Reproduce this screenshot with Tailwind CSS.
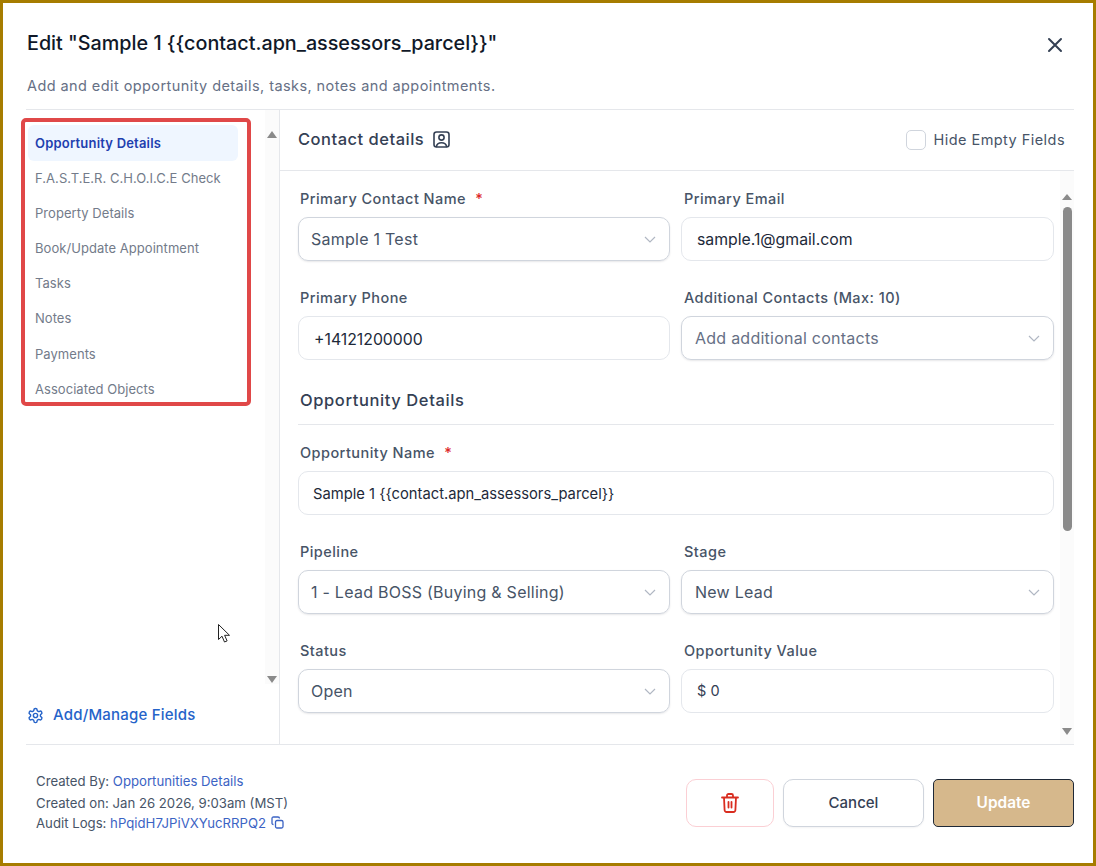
<!DOCTYPE html>
<html lang="en">
<head>
<meta charset="utf-8">
<title>Edit opportunity</title>
<script src="https://cdn.jsdelivr.net/npm/@tailwindcss/browser@4"></script>
</head>
<body class="bg-white">
<div class="relative w-[1096px] h-[866px] overflow-hidden border-[3px] border-[#a67c00] bg-white flex flex-col font-['Inter',sans-serif] text-[#344054]">

  <header class="ml-[23px] mr-[19px] h-[107px] shrink-0 border-b border-[#e5e7eb] relative">
    <h1 class="pl-px pt-[27px] text-[19.75px] leading-[26px] font-medium text-[#101828]">Edit "Sample 1 {{contact.apn_assessors_parcel}}"</h1>
    <p class="pl-px mt-[20px] text-[14.5px] tracking-[0.42px] leading-[20px] text-[#667085]">Add and edit opportunity details, tasks, notes and appointments.</p>
    <button class="absolute right-[11px] top-[34px] text-[#344054]" aria-label="Close">
      <svg class="w-[16px] h-[16px]" viewBox="0 0 16 16" fill="none" stroke="currentColor" stroke-width="2" stroke-linecap="round"><path d="M2 2l12 12M14 2L2 14"/></svg>
    </button>
  </header>

  <div class="ml-[23px] mr-[19px] h-[635px] shrink-0 flex border-b border-[#e5e7eb]">
    <aside class="w-[254px] shrink-0 border-r border-[#e5e7eb] flex flex-col">
      <div class="flex h-[574px]">
        <nav class="w-[239px] pl-[2px] pt-[15px] text-[13px] tracking-[0.05px] leading-[16px] text-[#737b8a] flex flex-col">
          <a class="h-[36px] flex items-center pl-[7px] w-[210px] rounded-md bg-[#eff6ff] font-semibold tracking-[0.2px] text-[#1e40af]">Opportunity Details</a>
          <a class="h-[35px] pb-[2px] pl-[7px] flex items-center">F.A.S.T.E.R. C.H.O.I.C.E Check</a>
          <a class="h-[35px] pb-[2px] pl-[7px] flex items-center">Property Details</a>
          <a class="h-[35px] pb-[2px] pl-[7px] flex items-center">Book/Update Appointment</a>
          <a class="h-[35px] pb-[2px] pl-[7px] flex items-center">Tasks</a>
          <a class="h-[35px] pb-[2px] pl-[7px] flex items-center">Notes</a>
          <a class="h-[36px] pl-[7px] flex items-center">Payments</a>
          <a class="h-[35px] pb-[2px] pl-[7px] flex items-center">Associated Objects</a>
        </nav>
        <div class="w-[14px] bg-[#fbfbfb] flex flex-col justify-between items-center pt-[21px] pb-[1px]">
          <div class="w-0 h-0 border-x-[5px] border-x-transparent border-b-[7px] border-b-[#8a8a8a]"></div>
          <div class="w-0 h-0 border-x-[5px] border-x-transparent border-t-[7px] border-t-[#8a8a8a]"></div>
        </div>
      </div>
      <a class="flex items-center gap-[9px] mt-[21px] text-[15px] tracking-[0.2px] leading-[20px] font-medium text-[#2563c9] pl-px">
        <svg class="w-[17px] h-[17px]" viewBox="0 0 24 24" fill="none" stroke="currentColor" stroke-width="2" stroke-linecap="round" stroke-linejoin="round"><path d="M12.22 2h-.44a2 2 0 0 0-2 2v.18a2 2 0 0 1-1 1.73l-.43.25a2 2 0 0 1-2 0l-.15-.08a2 2 0 0 0-2.73.73l-.22.38a2 2 0 0 0 .73 2.73l.15.1a2 2 0 0 1 1 1.72v.51a2 2 0 0 1-1 1.74l-.15.09a2 2 0 0 0-.73 2.73l.22.38a2 2 0 0 0 2.73.73l.15-.08a2 2 0 0 1 2 0l.43.25a2 2 0 0 1 1 1.73V20a2 2 0 0 0 2 2h.44a2 2 0 0 0 2-2v-.18a2 2 0 0 1 1-1.73l.43-.25a2 2 0 0 1 2 0l.15.08a2 2 0 0 0 2.73-.73l.22-.39a2 2 0 0 0-.73-2.73l-.15-.08a2 2 0 0 1-1-1.74v-.5a2 2 0 0 1 1-1.74l.15-.09a2 2 0 0 0 .73-2.73l-.22-.38a2 2 0 0 0-2.73-.73l-.15.08a2 2 0 0 1-2 0l-.43-.25a2 2 0 0 1-1-1.73V4a2 2 0 0 0-2-2z"/><circle cx="12" cy="12" r="3"/></svg>
        Add/Manage Fields
      </a>
    </aside>

    <main class="flex-1 min-w-0 flex flex-col">
      <div class="h-[61px] shrink-0 border-b border-[#e5e7eb] flex items-center justify-between pl-[18px] pr-[9px]">
        <div class="flex items-center gap-[9px] -mt-[2px]">
          <span class="text-[16.5px] tracking-[0.5px] leading-[24px] font-medium text-[#344054]">Contact details</span>
          <svg class="w-[17px] h-[17px]" viewBox="0 0 17 17" fill="none" stroke="currentColor" stroke-width="1.6" stroke-linecap="round" stroke-linejoin="round"><rect x="1" y="1" width="15" height="15" rx="2.5"/><circle cx="8.5" cy="6.5" r="2.6"/><path d="M3.5 15.5c.3-2.6 2-3.8 5-3.8s4.700 1.200 5 3.800"/></svg>
        </div>
        <label class="flex items-center gap-[8px] text-[14.5px] tracking-[0.45px] leading-[20px] text-[#475467]">
          <span class="w-[20px] h-[20px] rounded-[5px] border border-[#d0d5dd] bg-white"></span>
          Hide Empty Fields
        </label>
      </div>

      <div class="flex-1 min-h-0 flex relative">
        <form class="w-[757px] ml-[18px] pt-[17px] text-[14.5px] tracking-[0.45px] text-[#344054]">
          <div class="grid gap-x-[11px] gap-y-[26px] w-[756px] grid-cols-[372px_373px]">
            <div>
              <div class="h-[20px] leading-[22px] pl-[2px] font-medium text-[#475467] mb-[9px]">Primary Contact Name <span class="text-[#dc2626] ml-[5px]">*</span></div>
              <div class="h-[44px] rounded-[10px] border border-[#d0d5dd] shadow-[0_1px_2px_rgba(16,24,40,0.1)] flex items-center justify-between pl-[12px] pr-[13px] text-[16px] tracking-[0.25px] text-[#475467]">
                <span>Sample 1 Test</span>
                <svg class="w-[12px] h-[12px] text-[#b0b7c3]" viewBox="0 0 12 12" fill="none" stroke="currentColor" stroke-width="1.200"><path d="M1 4l5 5 5-5"/></svg>
              </div>
            </div>
            <div>
              <div class="h-[20px] leading-[22px] pl-[3px] font-medium text-[#475467] mb-[9px]">Primary Email</div>
              <div class="h-[44px] pt-[2px] rounded-[10px] border border-[#e4e7ec] flex items-center pl-[15px] text-[15.8px] tracking-normal text-[#1d2939]">sample.1@gmail.com</div>
            </div>
            <div>
              <div class="h-[20px] leading-[22px] pl-[2px] font-medium text-[#475467] mb-[9px]">Primary Phone</div>
              <div class="h-[44px] pt-[3px] rounded-[10px] border border-[#e4e7ec] flex items-center pl-[15px] text-[15.8px] tracking-normal text-[#1d2939]">+14121200000</div>
            </div>
            <div>
              <div class="h-[20px] leading-[22px] pl-[3px] font-medium text-[#475467] mb-[9px]">Additional Contacts (Max: 10)</div>
              <div class="h-[44px] rounded-[10px] border border-[#d0d5dd] shadow-[0_1px_2px_rgba(16,24,40,0.1)] flex items-center justify-between pl-[13px] pr-[13px] text-[16px] tracking-[0.25px] text-[#667085]">
                <span>Add additional contacts</span>
                <svg class="w-[12px] h-[12px] text-[#b0b7c3]" viewBox="0 0 12 12" fill="none" stroke="currentColor" stroke-width="1.200"><path d="M1 4l5 5 5-5"/></svg>
              </div>
            </div>
          </div>

          <div class="w-[756px] h-[65px] border-b border-[#e5e7eb] pl-[2px] pt-[28px] text-[16.5px] tracking-[0.6px] leading-[24px] font-medium text-[#344054]">Opportunity Details</div>

          <div class="w-[756px] mt-[17px]">
            <div class="h-[20px] leading-[22px] pl-[2px] font-medium text-[#475467] mb-[9px]">Opportunity Name <span class="text-[#dc2626] ml-[5px]">*</span></div>
            <div class="h-[44px] pt-[3px] rounded-[10px] border border-[#e4e7ec] flex items-center pl-[14px] text-[14.75px] tracking-normal text-[#1d2939]">Sample 1 {{contact.apn_assessors_parcel}}</div>
          </div>

          <div class="grid gap-x-[11px] gap-y-[26px] mt-[26px] w-[756px] grid-cols-[372px_373px]">
            <div>
              <div class="h-[20px] leading-[22px] pl-[2px] font-medium text-[#475467] mb-[9px]">Pipeline</div>
              <div class="h-[44px] rounded-[10px] border border-[#d0d5dd] shadow-[0_1px_2px_rgba(16,24,40,0.1)] flex items-center justify-between pl-[12px] pr-[13px] text-[16px] tracking-[0.25px] text-[#475467]">
                <span>1 - Lead BOSS (Buying &amp; Selling)</span>
                <svg class="w-[12px] h-[12px] text-[#b0b7c3]" viewBox="0 0 12 12" fill="none" stroke="currentColor" stroke-width="1.200"><path d="M1 4l5 5 5-5"/></svg>
              </div>
            </div>
            <div>
              <div class="h-[20px] leading-[22px] pl-[3px] font-medium text-[#475467] mb-[9px]">Stage</div>
              <div class="h-[44px] rounded-[10px] border border-[#d0d5dd] shadow-[0_1px_2px_rgba(16,24,40,0.1)] flex items-center justify-between pl-[13px] pr-[13px] text-[16px] tracking-[0.25px] text-[#475467]">
                <span>New Lead</span>
                <svg class="w-[12px] h-[12px] text-[#b0b7c3]" viewBox="0 0 12 12" fill="none" stroke="currentColor" stroke-width="1.200"><path d="M1 4l5 5 5-5"/></svg>
              </div>
            </div>
            <div>
              <div class="h-[20px] leading-[22px] pl-[2px] font-medium text-[#475467] mb-[9px]">Status</div>
              <div class="h-[44px] rounded-[10px] border border-[#d0d5dd] shadow-[0_1px_2px_rgba(16,24,40,0.1)] flex items-center justify-between pl-[12px] pr-[13px] text-[16px] tracking-[0.25px] text-[#475467]">
                <span>Open</span>
                <svg class="w-[12px] h-[12px] text-[#b0b7c3]" viewBox="0 0 12 12" fill="none" stroke="currentColor" stroke-width="1.200"><path d="M1 4l5 5 5-5"/></svg>
              </div>
            </div>
            <div>
              <div class="h-[20px] leading-[22px] pl-[3px] font-medium text-[#475467] mb-[9px]">Opportunity Value</div>
              <div class="h-[44px] rounded-[10px] border border-[#e4e7ec] flex items-center pl-[15px] text-[14.5px] tracking-normal text-[#344054]">$ 0</div>
            </div>
          </div>
        </form>
        <div class="absolute right-0 top-0 bottom-0 w-[14px] bg-[#fbfbfb] flex flex-col items-center pt-[23px] pb-[9px]">
          <div class="w-0 h-0 border-x-[5px] border-x-transparent border-b-[6px] border-b-[#8a8a8a]"></div>
          <div class="w-[9px] h-[324px] mt-[7px] rounded-full bg-[#8a8a8a]"></div>
          <div class="flex-1"></div>
          <div class="w-0 h-0 border-x-[5px] border-x-transparent border-t-[7px] border-t-[#8a8a8a]"></div>
        </div>
      </div>
    </main>
  </div>

  <footer class="ml-[23px] mr-[19px] flex-1 flex items-start justify-between pl-[10px]">
    <div class="pt-[26px] text-[13.2px] text-[#475467]">
      <p class="h-[22px] leading-[20px]">Created By: <span class="text-[#3b63c4]">Opportunities Details</span></p>
      <p class="h-[20px] leading-[20px]">Created on: Jan 26 2026, 9:03am (MST)</p>
      <p class="h-[19px] leading-[20px] flex items-center gap-[5px]"><span>Audit Logs: <span class="text-[#3b63c4]">hPqidH7JPiVXYucRRPQ2</span></span>
        <svg class="w-[13px] h-[13px] text-[#3b63c4]" viewBox="0 0 13 13" fill="none" stroke="currentColor" stroke-width="1.300" stroke-linejoin="round"><rect x="4.500" y="4.500" width="7.500" height="7.500" rx="1.500"/><path d="M2.500 8.500C1.500 8.500 1 8 1 7V2.500C1 1.500 1.500 1 2.500 1H7c1 0 1.500.5 1.500 1.500"/></svg>
      </p>
    </div>
    <div class="pt-[34px] flex gap-[9px] text-[15px] font-medium">
      <button class="w-[88px] h-[48px] rounded-[10px] border border-[#fbcfd4] bg-white flex items-center justify-center text-[#d92d20]" aria-label="Delete">
        <svg class="w-[18px] h-[20px]" viewBox="0 0 18 20" fill="none" stroke="currentColor" stroke-width="1.800" stroke-linecap="round" stroke-linejoin="round"><path d="M1 4.500h16M6 4.500V2.500C6 1.500 6.700 1 7.500 1h3c.8 0 1.500.5 1.500 1.500v2M3 4.500l.6 12.500c.1 1.200.8 2 2 2h6.800c1.200 0 1.900-.8 2-2L15 4.500M7.500 9v5.500M10.500 9v5.500"/></svg>
      </button>
      <button class="w-[141px] h-[48px] rounded-[10px] border border-[#d0d5dd] bg-white shadow-[0_1px_2px_rgba(16,24,40,0.05)] text-[#344054]">Cancel</button>
      <button class="w-[141px] h-[48px] rounded-[5px] border border-[#1f2937] bg-[#d6b88c] text-[15.4px] text-white font-semibold">Update</button>
    </div>
  </footer>

  <div class="absolute left-[18px] top-[115px] w-[230px] h-[288px] rounded-[5px] border-[4px] border-[#e04848] pointer-events-none"></div>
  <svg class="absolute left-[214px] top-[620px] w-[14px] h-[21px]" viewBox="0 0 14 21" fill="white" stroke="#222" stroke-width="1"><path d="M1.500 1.500v15l3.500-3.300 2.500 5.800 2.600-1.100-2.500-5.600h4.900z"/></svg>
</div>
</body>
</html>
